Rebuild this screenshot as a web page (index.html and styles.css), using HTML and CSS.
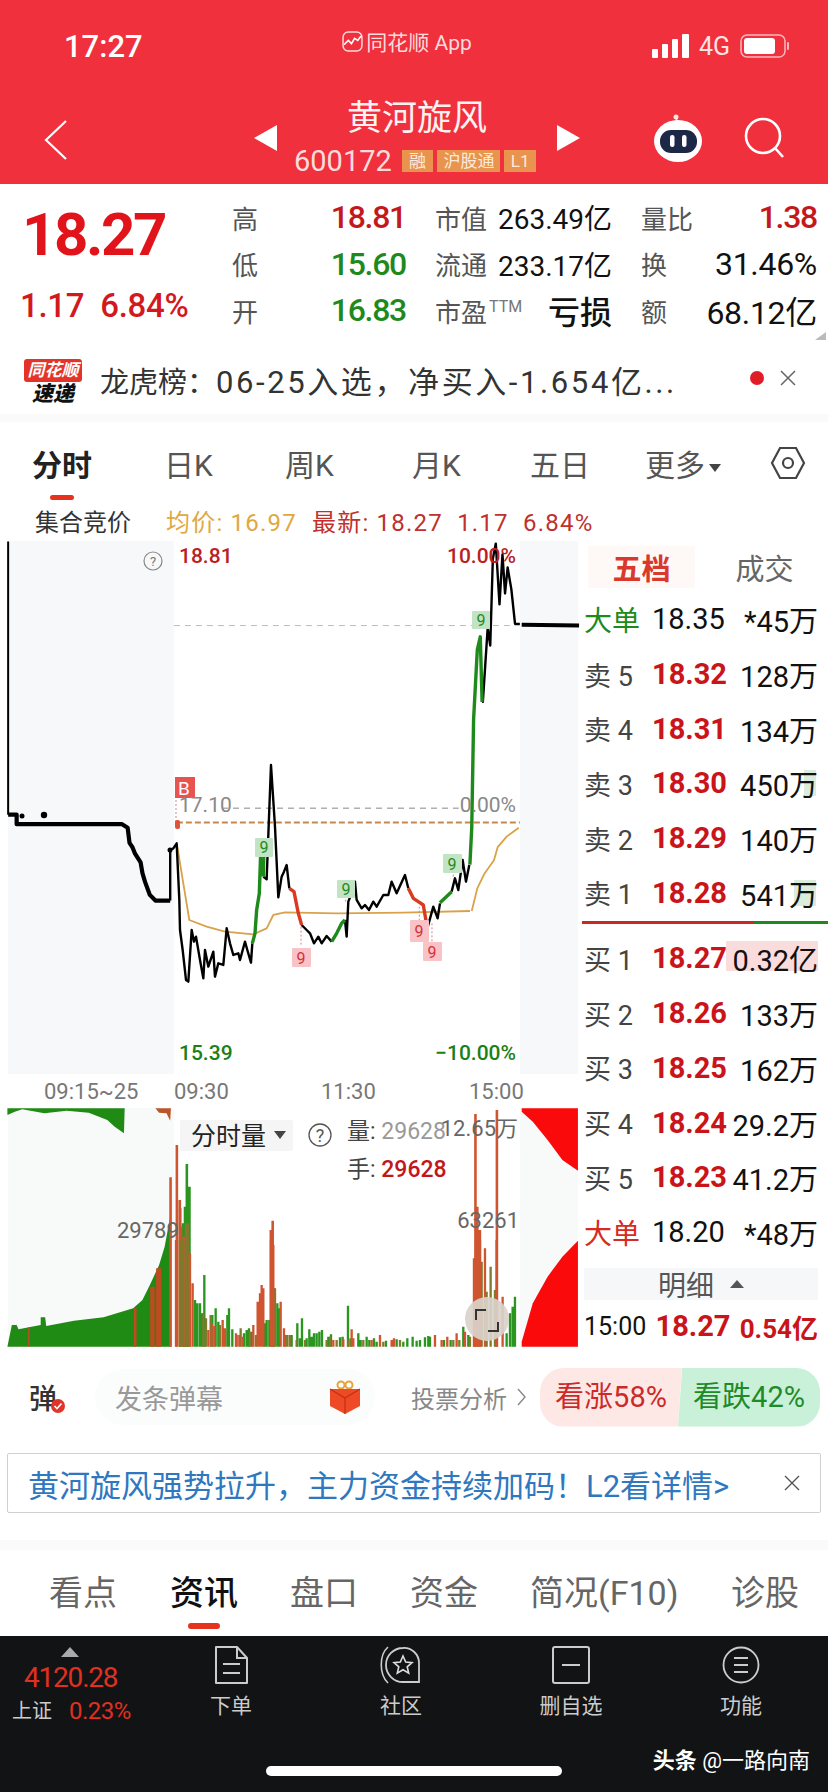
FILE: index.html
```html
<!DOCTYPE html>
<html lang="zh-CN">
<head>
    <meta charset="UTF-8">
    <meta name="viewport" content="width=device-width, initial-scale=1.0">
    <title>黄河旋风 600172</title>
    <link rel="stylesheet" href="styles.css">
</head>
<body>
<div class="page">
    <header class="top">
        <div class="status-bar">
            <span class="clock">17:27</span>
            <span class="app-name">
                <svg class="app-logo" viewBox="0 0 20 20"><rect x="1" y="1" width="18" height="18" rx="5" fill="none" stroke="#fbdcdc" stroke-width="1.4"/><path d="M2 13l4-4 3 3 3-5 3 2 3-4" fill="none" stroke="#fff" stroke-width="1.6"/></svg>
                同花顺 App
            </span>
            <span class="status-icons">
                <svg width="37" height="24" viewBox="0 0 37 24" fill="#fff"><rect x="0" y="15" width="6" height="9" rx="1"/><rect x="10" y="10" width="6" height="14" rx="1"/><rect x="20" y="5" width="6" height="19" rx="1"/><rect x="30" y="0" width="7" height="24" rx="1"/></svg>
                <span class="net">4G</span>
                <svg width="50" height="24" viewBox="0 0 50 24"><rect x="1" y="1" width="44" height="22" rx="6" fill="none" stroke="#f7b9bd" stroke-width="1.5"/><rect x="4" y="4" width="31" height="16" rx="3" fill="#fff"/><rect x="47" y="8" width="2" height="8" rx="1" fill="#f7b9bd"/></svg>
            </span>
        </div>
        <div class="nav-bar">
            <svg class="back" width="24" height="40" viewBox="0 0 24 40"><path d="M22 1L2 20l20 19" fill="none" stroke="#fff" stroke-width="2.2"/></svg>
            <div class="stock-switch">
                <span class="arrow arrow-left"></span>
                <div class="stock-name">
                    <h1>黄河旋风</h1>
                    <div class="stock-code">
                        <span>600172</span>
                        <em class="tag">融</em><em class="tag tag-wide">沪股通</em><em class="tag">L1</em>
                    </div>
                </div>
                <span class="arrow arrow-right"></span>
            </div>
            <div class="nav-icons">
                <svg width="48" height="48" viewBox="0 0 48 48">
                    <circle cx="22" cy="3" r="2.5" fill="#fde3e3"/>
                    <path d="M22 4l2 6" stroke="#fde3e3" stroke-width="1.5"/>
                    <ellipse cx="24" cy="27" rx="24" ry="21" fill="#fff"/>
                    <rect x="6" y="16" width="37" height="23" rx="11" fill="#1d2746"/>
                    <rect x="16" y="21" width="4.500" height="12" rx="2.200" fill="#fff"/>
                    <rect x="28" y="21" width="4.500" height="12" rx="2.200" fill="#fff"/>
                </svg>
                <svg width="42" height="42" viewBox="0 0 42 42"><circle cx="19" cy="19" r="17" fill="none" stroke="#fff" stroke-width="2.6"/><path d="M31 31l8 9" stroke="#fff" stroke-width="2.6"/></svg>
            </div>
        </div>
    </header>

    <section class="quote">
        <div class="price-box">
            <div class="price">18.27</div>
            <div class="change"><span>1.17</span><span>6.84%</span></div>
        </div>
        <div class="stats">
            <div class="cell"><label>高</label><b class="up">18.81</b></div>
            <div class="cell"><label>市值</label><span>263.49亿</span></div>
            <div class="cell"><label>量比</label><b class="up">1.38</b></div>
            <div class="cell"><label>低</label><b class="down">15.60</b></div>
            <div class="cell"><label>流通</label><span>233.17亿</span></div>
            <div class="cell"><label>换</label><span class="big">31.46%</span></div>
            <div class="cell"><label>开</label><b class="down">16.83</b></div>
            <div class="cell"><label>市盈<sup>TTM</sup></label><strong>亏损</strong></div>
            <div class="cell"><label>额</label><span class="big">68.12亿</span></div>
        </div>
        <i class="corner"></i>
    </section>

    <section class="news">
        <div class="news-logo"><span class="news-brand">同花顺</span><span class="news-sub">速递</span></div>
        <p>龙虎榜：<span>06-25入选，净买入-1.654亿...</span></p>
        <i class="red-dot"></i>
        <svg class="close" width="16" height="16" viewBox="0 0 16 16"><path d="M1 1l14 14M15 1L1 15" stroke="#666" stroke-width="1.5"/></svg>
    </section>

    <nav class="period-tabs">
        <a class="active">分时</a><a>日K</a><a>周K</a><a>月K</a><a>五日</a>
        <a class="more">更多<i></i></a>
        <svg width="36" height="34" viewBox="0 0 36 34"><path d="M10 2h16l8 15-8 15H10L2 17z" fill="none" stroke="#444" stroke-width="2.2"/><circle cx="18" cy="17" r="5" fill="none" stroke="#444" stroke-width="2.2"/></svg>
    </nav>

    <div class="info-row">
        <span class="auction">集合竞价</span>
        <span class="avg">均价: 16.97</span>
        <span class="latest">最新: 18.27&nbsp; 1.17&nbsp; 6.84%</span>
    </div>

    <main class="market">
        <svg class="chart" width="580" height="811" viewBox="0 541 580 811">
            <!-- panels -->
            <rect x="8" y="541" width="166" height="533" fill="#f7f8f9"/>
            <rect x="520" y="541" width="58" height="533" fill="#f7f8f9"/>
            <rect x="8" y="1108" width="166" height="239" fill="#f8f9f9"/>
            <rect x="520" y="1108" width="58" height="239" fill="#f8f9f9"/>

            <!-- price chart, left and right parts traced on a 2.703 / 2.306 grid -->
            <g transform="translate(0 420) scale(.37 .4337)" fill="none" stroke-linejoin="round">
                <path d="M470 474H1405" stroke="#bbb" stroke-dasharray="6 5" vector-effect="non-scaling-stroke"/>
                <path d="M600 895H1240" stroke="#888" stroke-dasharray="6 5" vector-effect="non-scaling-stroke"/>
                <path d="M478 928H1405" stroke="#c8884a" stroke-width="2" stroke-dasharray="6 3" vector-effect="non-scaling-stroke"/>
                <polyline points="1275,1132 1290,1080 1310,1045 1335,1015 1345,985 1370,960 1402,940" stroke="#d9a24a" stroke-width="1.8" vector-effect="non-scaling-stroke"/>
                <polyline points="22,910 45,910 45,932 330,932 345,940 350,975 358,985 365,1000 380,1020 385,1045 392,1065 405,1095 420,1108 460,1108" stroke="#000" stroke-width="4.200" vector-effect="non-scaling-stroke"/>
                <polyline points="22,280 22,910" stroke="#000" stroke-width="2" vector-effect="non-scaling-stroke"/>
                <polyline points="460,1108 460,992" stroke="#000" stroke-width="2.400" vector-effect="non-scaling-stroke"/>
                <path d="M1410 472L1565 474" stroke="#000" stroke-width="4" vector-effect="non-scaling-stroke"/>
                <polyline points="1303,650 1305,650 1318,480 1325,520 1332,320 1340,285 1350,425 1358,310 1365,400 1372,340 1382,390 1392,470 1405,470" stroke="#000" stroke-width="2.400" vector-effect="non-scaling-stroke"/>
                <polyline points="1270,1025 1275,940 1280,690 1290,530 1298,500 1303,650" stroke="#1f8a1c" stroke-width="3.400" vector-effect="non-scaling-stroke"/>
            </g>

            <!-- price chart, middle part traced at 3x from (170,760) -->
            <g transform="translate(170 760) scale(.3333)" fill="none" stroke-linejoin="round">
                <polyline points="22,260 35,340 58,480 110,500 165,515 250,523 290,505 310,465 345,457 500,460 700,458 900,453" stroke="#d9a24a" stroke-width="1.800" vector-effect="non-scaling-stroke"/>
                <path d="M18 60V190M393 500V560M748 440V480M786 490V545M527 425V400M850 350V330" stroke="#d9808a" stroke-dasharray="2 2" vector-effect="non-scaling-stroke"/>
                <g stroke="#000" stroke-width="2.400">
                    <polyline vector-effect="non-scaling-stroke" points="0,270 10,265 20,250 28,420 30,510 38,570 48,660 55,665 65,510 72,545 78,530 90,600 100,655 105,570 115,620 130,575 135,650 145,610 160,615 170,505 180,550 190,585 205,580 210,600 225,545 232,570 243,608 247,550"/>
                    <polyline vector-effect="non-scaling-stroke" points="280,350 290,358 303,15 315,200 325,412 335,350 342,335 350,315 358,385"/>
                    <polyline vector-effect="non-scaling-stroke" points="395,495 410,510 420,520 432,550 445,530 455,550 470,528 485,545"/>
                    <polyline vector-effect="non-scaling-stroke" points="525,480 530,530 535,425 545,400 555,365 560,420 575,445 585,435 597,450 610,425 620,440 640,405 655,405 665,365 680,400 705,345 715,385"/>
                    <polyline vector-effect="non-scaling-stroke" points="772,505 790,440 803,475 810,430"/>
                    <polyline vector-effect="non-scaling-stroke" points="845,395 855,355 865,390 878,300 888,365 898,315"/>
                </g>
                <g stroke="#1f8a1c" stroke-width="3.400">
                    <polyline vector-effect="non-scaling-stroke" points="247,550 255,520 260,450 268,400 272,280 282,255 280,350"/>
                    <polyline vector-effect="non-scaling-stroke" points="485,545 500,520 515,490 525,480"/>
                    <polyline vector-effect="non-scaling-stroke" points="810,428 845,395"/>
                </g>
                <g stroke="#d93a22" stroke-width="3.400">
                    <polyline vector-effect="non-scaling-stroke" points="358,385 372,395 385,460 395,495"/>
                    <polyline vector-effect="non-scaling-stroke" points="715,385 730,415 745,425 760,435 772,505"/>
                </g>
            </g>
            <rect x="175" y="820" width="5" height="9" rx="2" fill="#e0533a"/>
            <circle cx="22" cy="816" r="2.500" fill="#000"/><circle cx="44" cy="815" r="3.200" fill="#000"/><circle cx="170" cy="850" r="2.500" fill="#000"/>

            <g class="mark-green">
                <rect x="255" y="838" width="18" height="19" rx="1"/><rect x="337" y="880" width="18" height="18" rx="1"/>
                <rect x="443" y="854" width="19" height="19" rx="1"/><rect x="472" y="611" width="18" height="18" rx="1"/>
            </g>
            <g class="mark-red">
                <rect x="292" y="948" width="19" height="19" rx="1"/><rect x="410" y="920" width="19" height="22" rx="1"/><rect x="423" y="942" width="19" height="19" rx="1"/>
            </g>
            <g class="nine nine-green"><text x="264" y="853">9</text><text x="346" y="895">9</text><text x="452" y="870">9</text><text x="481" y="626">9</text></g>
            <g class="nine nine-red"><text x="301" y="964">9</text><text x="419" y="937">9</text><text x="432" y="958">9</text></g>

            <rect x="175" y="777" width="20" height="21" fill="#e8524f"/>
            <text class="b-tag" x="178" y="795">B</text>

            <circle cx="153" cy="561" r="9" fill="none" stroke="#888" stroke-width="1.2"/>
            <text class="help" x="153" y="566">?</text>

            <text class="axis up-text" x="179" y="563">18.81</text>
            <text class="axis up-text" x="516" y="563" text-anchor="end">10.00%</text>
            <text class="axis grey-text" x="179" y="812">17.10</text>
            <text class="axis grey-text" x="516" y="812" text-anchor="end">0.00%</text>
            <text class="axis down-text" x="179" y="1060">15.39</text>
            <text class="axis down-text" x="516" y="1060" text-anchor="end">−10.00%</text>

            <text class="time" x="44" y="1099">09:15~25</text>
            <text class="time" x="174" y="1099">09:30</text>
            <text class="time" x="321" y="1099">11:30</text>
            <text class="time" x="469" y="1099">15:00</text>

            <!-- volume side areas and tall bars, traced on a 2.703 / 3 grid -->
            <g transform="translate(0 1090) scale(.37 .3333)">
                <path d="M20 55V75L40 65 60 58 120 70 180 62 240 68 290 90 310 110 335 130 337 55z" fill="#1f8a14"/>
                <path d="M340 55H420L430 68 450 70 460 92 462 55z" fill="#b9572a"/>
                <path d="M20 770L32 705H45L50 718 110 705V682H122L125 708 200 692 280 682 360 655 385 630 405 585 430 525 445 470 460 380 463 770z" fill="#1f8a14"/>
                <path d="M362 770V655H369V770zM406 770V590H418V770zM422 770V535H436V770zM76 770V712H80V770z" fill="#c24a22"/>
                <path d="M1410 55H1562V242L1520 210 1480 150 1440 95 1410 65z" fill="#fa0a0a"/>
                <path d="M1410 770V755L1440 640 1480 560 1520 500 1562 452V770z" fill="#fa0a0a"/>
                <path class="bars-green" d="M487 770V355M495 770V400M500 770V350M505 770V222M512 770V290"/>
                <path class="bars-olive" d="M490 770V410M503 770V400M508 770V400"/>
                <path class="bars-red" d="M461 770V262M478 770V165M486 770V330M497 770V440M732 770V420M737 770V392M1282 770V510M1285 770V72M1290 770V350M1297 770V420M1343 770V60"/>
            </g>

            <!-- small volume bars, traced at 3x from (170,1240) -->
            <g transform="translate(170 1240) scale(.3333)">
                <path class="bars-green" d="M75 320V180M82 320V190M90 320V190M96 320V220M103 320V105M127 320V225M137 320V205M145 320V245M172 320V225M177 320V205M187 320V268M222 320V280M230 320V270M237 320V265M245 320V275M283 320V250M290 320V240M298 320V240M312 320V145M322 320V190M327 320V205M365 320V285M382 320V250M390 320V295M396 320V235M410 320V295M418 320V268M425 320V290M432 320V280M440 320V280M448 320V275M456 320V270M475 320V290M483 320V283M510 320V292M518 320V290M534 320V197M542 320V295M565 320V280M572 320V300M590 320V290M598 320V300M612 320V295M620 320V305M648 320V302M680 320V298M700 320V305M712 320V295M728 320V290M740 320V302M750 320V300M765 320V292M775 320V288M780 320V290M822 320V300M842 320V300M880 320V260M895 320V285M1010 320V280M1020 320V220M1028 320V200M1035 320V170"/>
                <path class="bars-olive" d="M30 320V0M40 320V0M50 320V0M100 320V220M108 320V235M122 320V225M150 320V255M200 320V285M212 320V265M240 320V275M258 320V285M315 320V145M345 320V285M352 320V285M360 320V285M380 320V300M405 320V300M470 320V300M480 320V290M500 320V300M535 320V300M580 320V300M640 320V305M690 320V300M850 320V300M868 320V300M900 320V290M935 320V65M950 320V155M962 320V80M975 320V150"/>
                <path class="bars-red" d="M18 320V0M60 320V40M68 320V130M115 320V270M125 320V250M133 320V258M158 320V240M165 320V265M198 320V280M208 320V285M218 320V290M250 320V255M263 320V185M270 320V160M275 320V135M280 320V145M303 320V0M310 320V15M332 320V185M342 320V265M490 320V300M520 320V298M545 320V268M550 320V295M605 320V300M630 320V285M665 320V300M672 320V295M795 320V285M815 320V300M832 320V290M860 320V280M885 320V275M912 320V55M918 320V0M925 320V0M930 320V0M945 320V25M980 320V0M998 320V170"/>
            </g>

            <rect x="180" y="1120" width="113" height="31" rx="2" fill="#f5f5f5"/>
            <text class="vol-menu" x="191" y="1145">分时量</text>
            <path d="M274 1131h12l-6 8z" fill="#444"/>
            <circle cx="320" cy="1135" r="11" fill="none" stroke="#555" stroke-width="1.3"/>
            <text class="help help-big" x="320" y="1142">?</text>
            <text class="vol-label" x="347" y="1139">量: <tspan fill="#999">29628</tspan></text>
            <text class="vol-label" x="347" y="1177">手: <tspan fill="#c2161b" font-weight="500">29628</tspan></text>
            <text class="vol-scale" x="518" y="1136" text-anchor="end">12.65万</text>
            <text class="vol-scale" x="117" y="1238">29789</text>
            <text class="vol-scale" x="519" y="1228" text-anchor="end">63261</text>

            <circle cx="487" cy="1319" r="22" fill="#d9d3cb" fill-opacity=".92"/>
            <path d="M476 1320v-10h10M498 1322v9h-10" fill="none" stroke="#333" stroke-width="2"/>
        </svg>

        <aside class="book">
            <div class="book-tabs"><span class="on">五档</span><span>成交</span></div>
            <div class="row"><span class="lab big-order down">大单</span><span class="dark">18.35</span><span class="vol">*45万</span></div>
            <div class="row"><span class="lab">卖 5</span><b>18.32</b><span class="vol">128万</span></div>
            <div class="row"><span class="lab">卖 4</span><b>18.31</b><span class="vol">134万</span></div>
            <div class="row"><span class="lab">卖 3</span><b>18.30</b><span class="vol"><i class="depth depth-s3"></i>450万</span></div>
            <div class="row"><span class="lab">卖 2</span><b>18.29</b><span class="vol">140万</span></div>
            <div class="row"><span class="lab">卖 1</span><b>18.28</b><span class="vol"><i class="depth depth-s1"></i>541万</span></div>
            <div class="split"></div>
            <div class="row"><span class="lab">买 1</span><b>18.27</b><span class="vol"><i class="depth depth-b1"></i>0.32亿</span></div>
            <div class="row"><span class="lab">买 2</span><b>18.26</b><span class="vol">133万</span></div>
            <div class="row"><span class="lab">买 3</span><b>18.25</b><span class="vol">162万</span></div>
            <div class="row"><span class="lab">买 4</span><b>18.24</b><span class="vol">29.2万</span></div>
            <div class="row"><span class="lab">买 5</span><b>18.23</b><span class="vol">41.2万</span></div>
            <div class="row"><span class="lab big-order up">大单</span><span class="dark">18.20</span><span class="vol">*48万</span></div>
            <div class="detail-bar">明细<i></i></div>
            <div class="tick"><span>15:00</span><b>18.27</b><b class="tick-amt">0.54亿</b></div>
        </aside>
    </main>

    <section class="danmaku">
        <span class="dm-icon">弹<svg width="14" height="14" viewBox="0 0 14 14"><circle cx="7" cy="7" r="7" fill="#e0352b"/><path d="M3.5 7l2.5 2.5 4.5-5" fill="none" stroke="#fff" stroke-width="1.6"/></svg></span>
        <div class="dm-input">
            <span>发条弹幕</span>
            <svg width="34" height="34" viewBox="0 0 34 34"><circle cx="13" cy="5" r="3.5" fill="none" stroke="#e8a33a" stroke-width="2"/><circle cx="21" cy="5" r="3.5" fill="none" stroke="#e8a33a" stroke-width="2"/><path d="M2 9h30v17l-15 8-15-8z" fill="#ee4a25"/><path d="M2 9l15 9 15-9M17 18v16" fill="none" stroke="#c22f14" stroke-width="1.2"/></svg>
        </div>
        <span class="vote-link">投票分析<svg width="9" height="18" viewBox="0 0 9 18"><path d="M1 1l7 8-7 8" fill="none" stroke="#888" stroke-width="1.4"/></svg></span>
        <div class="vote">
            <span class="vote-up">看涨58%</span>
            <span class="vote-down">看跌42%</span>
        </div>
    </section>

    <section class="banner">
        <p>黄河旋风强势拉升，主力资金持续加码！L2看详情&gt;</p>
        <svg width="16" height="16" viewBox="0 0 16 16"><path d="M1 1l14 14M15 1L1 15" stroke="#555" stroke-width="1.4"/></svg>
    </section>

    <nav class="content-tabs">
        <a>看点</a><a class="active">资讯</a><a>盘口</a><a>资金</a><a>简况(F10)</a><a>诊股</a>
    </nav>

    <footer class="bottom">
        <div class="bottom-row">
            <div class="index">
                <i class="index-arrow"></i>
                <div class="index-value">4120.28</div>
                <div class="index-line"><span>上证</span><b>0.23%</b></div>
            </div>
            <a class="tool">
                <svg width="36" height="38" viewBox="0 0 36 38"><path d="M3 1h21l10 11v25H3z" fill="none" stroke="#ccc" stroke-width="2" stroke-linejoin="round"/><path d="M24 1v11h10M10 18h17M10 27h17" fill="none" stroke="#ccc" stroke-width="2"/></svg>
                下单
            </a>
            <a class="tool">
                <svg width="42" height="38" viewBox="0 0 42 38"><path d="M8 1C-1 9-1 28 8 37" fill="none" stroke="#ccc" stroke-width="1.6"/><path d="M23 2a15 15 0 0 1 16 15v19H23a17 17 0 0 1 0-34z" fill="none" stroke="#ccc" stroke-width="1.8"/><path d="M23 10l2.700 6 6.300 .6-4.800 4.200 1.500 6.400-5.700-3.400-5.700 3.400 1.500-6.400-4.800-4.200 6.300-.6z" fill="none" stroke="#ddd" stroke-width="1.6"/></svg>
                社区
            </a>
            <a class="tool">
                <svg width="38" height="38" viewBox="0 0 38 38"><rect x="1" y="1" width="36" height="36" rx="2" fill="none" stroke="#ccc" stroke-width="2"/><path d="M10 19h18" stroke="#ccc" stroke-width="2"/></svg>
                删自选
            </a>
            <a class="tool">
                <svg width="38" height="38" viewBox="0 0 38 38"><circle cx="19" cy="19" r="17.500" fill="none" stroke="#ccc" stroke-width="1.8"/><path d="M12 12h14M12 19h14M12 26h14" stroke="#ccc" stroke-width="2"/></svg>
                功能
            </a>
        </div>
        <div class="home-bar"></div>
        <div class="watermark"><b>头条</b> @一路向南</div>
    </footer>
</div>
</body>
</html>
```

FILE: styles.css
```css
* {
    margin: 0;
    padding: 0;
    box-sizing: border-box;
}

body {
    background: white;
    font-family: Roboto, "Noto Sans CJK SC", sans-serif;
    color: #222;
}

.page {
    width: 828px;
    height: 1792px;
    overflow: hidden;
}

i, em {
    font-style: normal;
}

/* red header */
.top {
    height: 184px;
    background: #f0303d;
    color: white;
}

.status-bar {
    height: 70px;
    padding: 22px 38px 0 64px;
    display: grid;
    grid-template-columns: 1fr auto 1fr;
    align-items: center;
}

.clock {
    font-size: 31px;
    font-weight: 500;
}

.app-name {
    display: flex;
    align-items: center;
    gap: 3px;
    font-size: 21px;
    color: #fbdcdc;
    margin-top: -10px;
    margin-right: 40px;
}

.app-logo {
    width: 21px;
    height: 21px;
}

.status-icons {
    display: flex;
    align-items: center;
    justify-content: flex-end;
    gap: 10px;
}

.net {
    font-size: 25px;
    color: #fde3e3;
}

.nav-bar {
    height: 114px;
    padding: 0 42px 0 48px;
    display: grid;
    grid-template-columns: 1fr auto 1fr;
    align-items: center;
}

.back {
    margin: 26px 0 0 -4px;
}

.stock-switch {
    display: flex;
    align-items: center;
    gap: 17px;
    margin-top: 20px;
}

.arrow {
    width: 0;
    height: 0;
    margin-top: 2px;
    border-top: 13px solid transparent;
    border-bottom: 13px solid transparent;
}

.arrow-left {
    border-right: 23px solid white;
}

.arrow-right {
    border-left: 23px solid white;
}

.stock-name {
    width: 246px;
    text-align: center;
}

.stock-name h1 {
    font-size: 35px;
    line-height: 42px;
    font-weight: 400;
    color: #fdf1f1;
}

.stock-code {
    display: flex;
    align-items: center;
    justify-content: center;
    height: 32px;
    margin-top: 5px;
    font-size: 29px;
    color: #fbdcdc;
    white-space: nowrap;
}

.stock-code span {
    margin-right: 10px;
}

.tag {
    width: 32px;
    height: 22px;
    margin-right: 4px;
    background: #e8944f;
    color: #fdeadb;
    font-size: 17px;
    line-height: 22px;
    text-align: center;
}

.tag-wide {
    width: 64px;
}

.nav-icons {
    display: flex;
    justify-content: flex-end;
    align-items: center;
    gap: 42px;
    margin-top: 22px;
}

/* quote numbers */
.quote {
    position: relative;
    height: 158px;
    padding: 10px 11px 0 0;
    display: flex;
}

.price-box {
    width: 232px;
    padding-left: 22px;
}

.price {
    margin-top: 6px;
    font-size: 60px;
    line-height: 70px;
    font-weight: 700;
    letter-spacing: -2.400px;
    color: #e1141c;
}

.change {
    margin: 16px 0 0 -2px;
    display: flex;
    gap: 16px;
    font-size: 33px;
    line-height: 40px;
    font-weight: 500;
    letter-spacing: -.3px;
    color: #d2191e;
}

.stats {
    flex: 1;
    display: grid;
    grid-template-columns: 174px 177px 176px;
    grid-auto-rows: 46.5px;
    column-gap: 29px;
}

.cell {
    display: flex;
    align-items: center;
    justify-content: space-between;
    font-size: 28px;
    color: #111;
}

.cell label {
    font-size: 26px;
    color: #555;
}

.cell label sup {
    font-size: 16px;
    color: #777;
    margin-left: 2px;
}

.cell b {
    font-size: 32px;
    font-weight: 500;
    letter-spacing: -1.300px;
}

.cell .big {
    font-size: 32px;
    letter-spacing: -.3px;
}

.cell strong {
    font-size: 32px;
    font-weight: 500;
}

.up {
    color: #c4181d;
}

.down {
    color: #1f8a1c;
}

.corner {
    position: absolute;
    right: 2px;
    bottom: 2px;
    border-left: 11px solid transparent;
    border-bottom: 8px solid #bbb;
}

/* news strip */
.news {
    height: 80px;
    padding-left: 24px;
    display: flex;
    align-items: center;
    border-bottom: 8px solid #fafafa;
}

.news-logo {
    width: 58px;
    display: flex;
    flex-direction: column;
    align-items: center;
    margin: 10px 18px 0 0;
}

.news-brand {
    width: 58px;
    height: 23px;
    background: #e4342a;
    border-radius: 3px;
    color: white;
    font-size: 17px;
    line-height: 23px;
    font-weight: 700;
    font-style: italic;
    text-align: center;
}

.news-sub {
    font-size: 21px;
    line-height: 25px;
    font-weight: 900;
    font-style: italic;
    color: #111;
}

.news p {
    width: 650px;
    margin-top: 3px;
    font-size: 29px;
    color: #333;
    white-space: nowrap;
}

.news p span {
    font-size: 31px;
    letter-spacing: 2.600px;
}

.red-dot {
    width: 14px;
    height: 14px;
    border-radius: 50%;
    background: #e01c28;
}

.close {
    margin-left: 16px;
}

/* period tabs */
.period-tabs {
    height: 78px;
    padding: 3px 0 0 32px;
    display: grid;
    grid-template-columns: 132px 121px 127px 118px 115px 125px 36px;
    align-items: center;
    font-size: 30px;
    color: #555;
}

.period-tabs a {
    position: relative;
}

.period-tabs .active {
    font-weight: 700;
    color: #222;
}

.period-tabs .active::after {
    content: "";
    position: absolute;
    left: 18px;
    bottom: -15px;
    width: 24px;
    height: 5px;
    border-radius: 3px;
    background: #e5331f;
}

.more i {
    display: inline-block;
    margin-left: 4px;
    vertical-align: 4px;
    border-left: 6px solid transparent;
    border-right: 6px solid transparent;
    border-top: 8px solid #444;
}

.info-row {
    height: 41px;
    padding-left: 35px;
    display: flex;
    align-items: center;
    font-size: 24px;
    white-space: nowrap;
}

.auction {
    width: 131px;
    color: #333;
}

.avg {
    width: 146px;
    letter-spacing: 1.200px;
    color: #e0a83e;
}

.latest {
    letter-spacing: 1.200px;
    color: #c0302c;
}

/* chart and order book */
.market {
    height: 811px;
    display: flex;
}

.chart {
    flex: none;
    display: block;
}

.bars-green {
    fill: none;
    stroke: #2a961f;
    stroke-width: 7;
}

.bars-olive {
    fill: none;
    stroke: #7f7a2c;
    stroke-width: 7;
}

.bars-red {
    fill: none;
    stroke: #cf5530;
    stroke-width: 7;
}

.mark-green {
    fill: #c2e4c4;
}

.mark-red {
    fill: #f8c2c6;
}

.nine {
    font-size: 16px;
    text-anchor: middle;
}

.nine-green {
    fill: #1f8a1c;
}

.nine-red {
    fill: #d6303a;
}

.b-tag {
    font-size: 19px;
    fill: white;
}

.help {
    font-size: 13px;
    fill: #777;
    text-anchor: middle;
}

.help-big {
    font-size: 18px;
    fill: #555;
}

.axis {
    font-size: 21px;
    font-weight: 500;
}

.up-text {
    fill: #b9211f;
}

.grey-text {
    fill: #888;
    font-weight: 400;
}

.down-text {
    fill: #1c7f18;
}

.time {
    font-size: 22px;
    fill: #777;
}

.vol-menu {
    font-size: 25px;
    fill: #222;
}

.vol-label {
    font-size: 23px;
    fill: #444;
}

.vol-scale {
    font-size: 22px;
    fill: #666;
}

.book {
    width: 248px;
    padding: 0 10px 0 4px;
}

.book-tabs {
    height: 51px;
    display: flex;
    align-items: center;
    font-size: 29px;
    color: #666;
}

.book-tabs span {
    flex: 1;
    text-align: center;
}

.book-tabs .on {
    margin: 0 16px 0 4px;
    background: #fef9f6;
    color: #d9382c;
    font-weight: 700;
}

.row {
    height: 54.7px;
    display: grid;
    grid-template-columns: 68px 72px 1fr;
    align-items: center;
    font-size: 29px;
    white-space: nowrap;
}

.row b {
    font-weight: 700;
    color: #c9141a;
}

.row .dark {
    color: #111;
}

.lab {
    font-size: 27px;
    color: #444;
}

.lab.big-order {
    font-size: 28px;
}

.lab.down {
    color: #1f8a1c;
}

.lab.up {
    color: #d62b22;
}

.vol {
    position: relative;
    text-align: right;
    color: #111;
}

.depth {
    position: absolute;
    top: 8px;
    right: 2px;
    height: 26px;
    z-index: -1;
}

.depth-s3 {
    width: 12px;
    background: #dcecdc;
}

.depth-s1 {
    width: 22px;
    background: #dcecdc;
}

.depth-b1 {
    width: 92px;
    top: 4px;
    right: 0;
    height: 30px;
    background: #fbdcdc;
}

.split {
    height: 3px;
    margin: 1px -10px 7px -2px;
    background: linear-gradient(to right, #c9291e 70%, #1f8a1c 70%);
}

.detail-bar {
    height: 32px;
    margin-top: 9px;
    background: #f6f7f9;
    display: flex;
    align-items: center;
    justify-content: center;
    font-size: 28px;
    color: #555;
}

.detail-bar i {
    margin-left: 16px;
    border-left: 7px solid transparent;
    border-right: 7px solid transparent;
    border-bottom: 8px solid #555;
}

.tick {
    height: 52px;
    display: flex;
    align-items: center;
    justify-content: space-between;
    font-size: 25px;
    color: #111;
    white-space: nowrap;
}

.tick b {
    font-size: 29px;
    font-weight: 700;
    color: #c9141a;
}

.tick .tick-amt {
    font-size: 26px;
}

/* danmaku and vote */
.danmaku {
    height: 90px;
    padding-left: 29px;
    display: flex;
    align-items: center;
}

.dm-icon {
    width: 66px;
    position: relative;
    font-size: 28px;
    font-weight: 500;
    color: #333;
}

.dm-icon svg {
    position: absolute;
    left: 22px;
    top: 22px;
}

.dm-input {
    width: 280px;
    height: 56px;
    padding: 0 13px 0 20px;
    display: flex;
    align-items: center;
    justify-content: space-between;
    border-radius: 28px;
    background: #fbfcfc;
    font-size: 27px;
    color: #999;
}

.vote-link {
    width: 129px;
    margin-left: 36px;
    display: flex;
    align-items: center;
    gap: 10px;
    font-size: 24px;
    color: #888;
}

.vote {
    display: flex;
    font-size: 29px;
    line-height: 59px;
    white-space: nowrap;
}

.vote-up,
.vote-down {
    width: 142px;
    height: 59px;
    text-align: center;
}

.vote-up {
    background: #fde8e6;
    color: #cc2a2a;
    border-radius: 24px 0 0 24px;
    clip-path: polygon(0 0, 100% 0, 97% 100%, 0 100%);
}

.vote-down {
    margin-left: -4px;
    background: #c9f0d8;
    color: #1f8a2a;
    border-radius: 0 24px 24px 0;
    clip-path: polygon(3% 0, 100% 0, 100% 100%, 0 100%);
}

/* promo banner */
.banner {
    height: 60px;
    margin: 11px 7px 0;
    padding: 0 20px;
    display: flex;
    align-items: center;
    justify-content: space-between;
    border: 1px solid #d0d0d0;
    border-radius: 2px;
}

.banner p {
    font-size: 31px;
    color: #2f78bf;
    white-space: nowrap;
}

/* bottom content tabs */
.content-tabs {
    height: 96px;
    margin-top: 27px;
    padding: 0 0 5px 49px;
    display: grid;
    grid-template-columns: 121px 120px 120px 120px 201px 69px;
    align-items: center;
    border-top: 10px solid #fafafa;
    font-size: 34px;
    color: #666;
    white-space: nowrap;
}

.content-tabs a {
    position: relative;
}

.content-tabs .active {
    color: #111;
    font-weight: 500;
}

.content-tabs .active::after {
    content: "";
    position: absolute;
    left: 18px;
    bottom: -14px;
    width: 32px;
    height: 6px;
    border-radius: 3px;
    background: #e5331f;
}

/* black footer */
.bottom {
    position: relative;
    height: 156px;
    background: #121315;
    color: #ccc;
}

.bottom-row {
    height: 130px;
    padding-top: 10px;
    display: grid;
    grid-template-columns: 146px 170px 170px 170px 170px;
}

.index {
    padding-left: 12px;
}

.index-arrow {
    display: block;
    width: 0;
    margin: 1px 0 0 49px;
    border-left: 9px solid transparent;
    border-right: 9px solid transparent;
    border-bottom: 10px solid #aaa;
}

.index-value {
    margin: 4px 0 0 12px;
    font-size: 28px;
    line-height: 34px;
    letter-spacing: -1.200px;
    color: #e03020;
}

.index-line {
    display: flex;
    gap: 17px;
    margin-top: 1px;
    font-size: 20px;
    line-height: 30px;
    white-space: nowrap;
}

.index-line b {
    font-size: 24px;
    font-weight: 400;
    letter-spacing: -.5px;
    color: #e03020;
}

.tool {
    display: flex;
    flex-direction: column;
    align-items: center;
    gap: 7px;
    font-size: 21px;
    line-height: 30px;
}

.home-bar {
    width: 296px;
    height: 10px;
    margin: 0 auto;
    border-radius: 5px;
    background: white;
}

.watermark {
    position: absolute;
    right: 18px;
    top: 106px;
    font-size: 22px;
    color: white;
    white-space: nowrap;
}
```
